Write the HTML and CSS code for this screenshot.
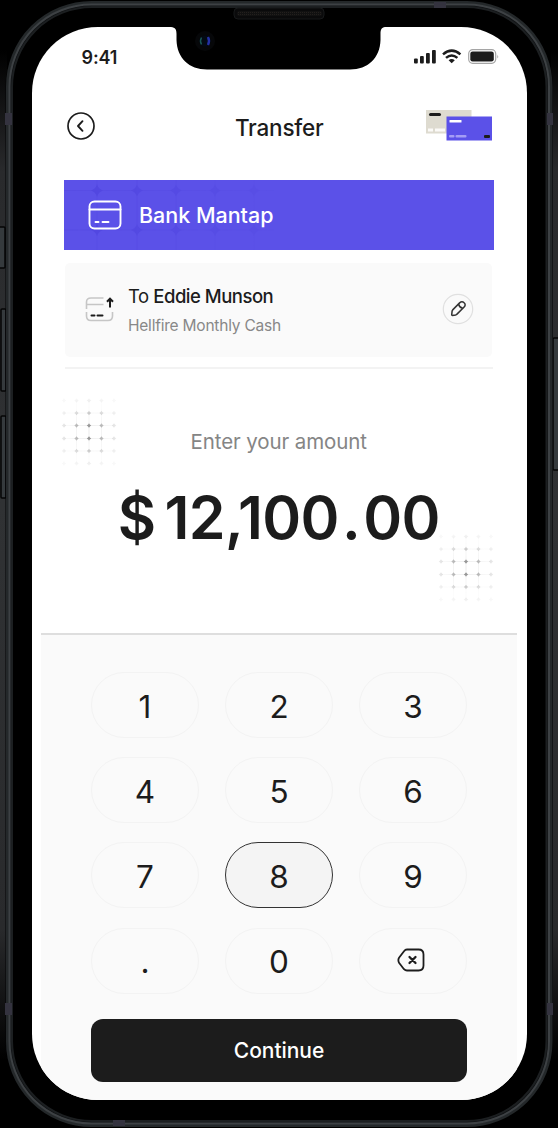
FILE: index.html
```html
<!DOCTYPE html>
<html lang="en">
<head>
<meta charset="utf-8">
<title>Transfer</title>
<link rel="stylesheet" href="styles.css">
</head>
<body>
<div class="stage">
  <svg class="device" width="558" height="1128" viewBox="0 0 558 1128" aria-hidden="true">
    <defs>
      <linearGradient id="side" x1="0" y1="0" x2="0" y2="1">
        <stop offset="0" stop-color="#000"/><stop offset=".12" stop-color="#292a2c"/><stop offset=".45" stop-color="#303234"/><stop offset=".87" stop-color="#292a2c"/><stop offset="1" stop-color="#000"/>
      </linearGradient>
      <pattern id="mesh" width="2" height="2" patternUnits="userSpaceOnUse"><rect width="2" height="2" fill="#111"/><rect width="1" height="1" fill="#231f1d"/></pattern>
    </defs>
    <rect width="558" height="1128" fill="#000"/>
    <rect y="50" width="7" height="1010" fill="url(#side)"/>
    <rect x="551" y="50" width="7" height="1010" fill="url(#side)"/>
    <g fill="#353a3d" stroke="#050505" stroke-width="1.5">
      <rect x="-2" y="227" width="7" height="41" rx="1"/>
      <rect x="1" y="309" width="5" height="82" rx="1"/>
      <rect x="1" y="416" width="5" height="82" rx="1"/>
      <rect x="553" y="338" width="6" height="132" rx="1"/>
    </g>
    <rect x="5.5" y="1" width="547.5" height="1126" rx="86" fill="#030304"/>
    <rect x="7.5" y="2.5" width="543.5" height="1123" rx="84" fill="#101214" stroke="#24282a" stroke-width="3"/>
    <rect x="9.5" y="4.5" width="539.5" height="1119" rx="82" fill="none" stroke="#3d4144" stroke-width="2"/>
    <rect x="12" y="7" width="534.5" height="1114" rx="80" fill="#000" stroke="#1c1f21" stroke-width="2"/>
    <g fill="#34333f">
      <rect x="5" y="113" width="7" height="12"/><rect x="547" y="113" width="6" height="12"/>
      <rect x="5" y="1003" width="7" height="12"/><rect x="547" y="1003" width="6" height="12"/>
      <rect x="434" y="2" width="12" height="6"/><rect x="113" y="1120" width="12" height="6"/>
    </g>
    <rect x="234" y="8" width="90" height="11" rx="4" fill="#0a0a0b" stroke="#17191a"/>
    <rect x="237" y="11" width="85" height="5" rx="2.5" fill="url(#mesh)"/>
  </svg>

  <main class="screen">
    <svg class="notch" width="214" height="43" viewBox="0 0 214 43" aria-hidden="true">
      <path d="M0 0H214C210.500 .5 209.500 2.500 209.500 7V13C209 31 197 42.500 179 42.500H36C18 42.500 6 31 5.500 13V7C5.500 2.500 4.500 .5 0 0Z" fill="#000"/>
      <circle cx="34" cy="14" r="10" fill="#060709"/><circle cx="34" cy="14" r="5.500" fill="#030a14"/>
      <path d="M30.500 10.500Q28.500 14 30.500 17.500" stroke="#195553" stroke-width="1.500" fill="none"/>
      <path d="M37 10Q39 14 37 18" stroke="#2430a3" stroke-width="2.400" fill="none"/>
    </svg>

    <div class="status">
      <span class="time">9:41</span>
      <svg width="86" height="18" viewBox="0 0 86 18">
        <g fill="#1c1c1c">
          <rect x="1" y="10.500" width="3.800" height="5" rx="1"/><rect x="7" y="8" width="3.800" height="7.500" rx="1"/><rect x="13" y="5" width="3.800" height="10.500" rx="1"/><rect x="19" y="2" width="3.800" height="13.500" rx="1"/>
          <path d="M38.700 15.200L35.600 12.200Q38.700 9.800 41.800 12.200Z"/>
        </g>
        <path d="M30 6.400Q38.700-1.200 47.400 6.400M33 9.900Q38.700 5 44.400 9.900" fill="none" stroke="#1c1c1c" stroke-width="2.500"/>
        <rect x="55.700" y="1.700" width="27" height="13.600" rx="4" fill="none" stroke="#a5a5a5" stroke-width="1.200"/>
        <rect x="57.300" y="3.400" width="23.500" height="10.200" rx="2.300" fill="#1c1c1c"/>
        <path d="M84.300 6.500Q86 8.500 84.300 10.500Z" fill="#a5a5a5"/>
      </svg>
    </div>

    <header class="header">
      <svg width="30" height="30" viewBox="0 0 30 30" fill="none" stroke="#1c1c1c">
        <circle cx="15" cy="15" r="13" stroke-width="1.700"/><path d="M16.500 10.200L12 15L16.500 19.800" stroke-width="1.900" stroke-linecap="round" stroke-linejoin="round"/>
      </svg>
      <h1 class="title">Transfer</h1>
      <svg width="66" height="32" viewBox="0 0 66 32">
        <rect x="0" y="0" width="45.500" height="23.500" fill="#dedbd0"/>
        <rect x="3" y="3" width="12" height="3" rx="1.500" fill="#1c1c1c"/>
        <path d="M2 18.500h5v3h-5zM9 18.500h10v3h-10z" fill="#fbfaf7"/>
        <rect x="20.500" y="6.500" width="45.500" height="24" fill="#5b51e8"/>
        <rect x="23.500" y="10" width="12" height="2.500" rx=".5" fill="#fff"/>
        <rect x="23" y="25" width="5.500" height="2.500" rx="1" fill="#a49df5"/><rect x="29.500" y="25" width="11" height="2.500" rx="1" fill="#a49df5"/>
        <rect x="58" y="25" width="6" height="3" rx="1" fill="#1c1c1c"/>
      </svg>
    </header>

    <section class="bank">
      <svg class="bank-pattern" width="430" height="70" viewBox="0 0 430 70" aria-hidden="true">
        <defs>
          <linearGradient id="fade"><stop offset="0" stop-color="#fff" stop-opacity=".6"/><stop offset=".3" stop-color="#fff" stop-opacity=".3"/><stop offset=".5" stop-color="#fff" stop-opacity=".1"/><stop offset="1" stop-color="#fff" stop-opacity="0"/></linearGradient>
          <mask id="m"><rect width="430" height="70" fill="url(#fade)"/></mask>
          <path id="star" d="M0-6Q1.500-1.500 6 0Q1.500 1.500 0 6Q-1.500 1.500-6 0Q-1.500-1.500 0-6Z"/>
        </defs>
        <g mask="url(#m)" fill="#4a3fdb">
          <path d="M0 10.500H210M0 50H210M33 0V70M73 0V70M112 0V70M151 0V70M190 0V70" stroke="#5246df" stroke-width=".7"/>
          <use href="#star" x="33" y="10.500"/><use href="#star" x="73" y="10.500"/><use href="#star" x="112" y="10.500"/><use href="#star" x="151" y="10.500"/><use href="#star" x="190" y="10.500"/>
          <use href="#star" x="33" y="50"/><use href="#star" x="73" y="50"/><use href="#star" x="112" y="50"/><use href="#star" x="151" y="50"/><use href="#star" x="190" y="50"/>
        </g>
      </svg>
      <svg class="bank-icon" width="34" height="30" viewBox="0 0 34 30" fill="none" stroke="#fff" stroke-width="1.900" stroke-linecap="round">
        <rect x="1.500" y="1.500" width="31" height="27" rx="5"/><path d="M1.500 9.500H32.500"/><path d="M7.500 22H10.500M14.500 22H20.500"/>
      </svg>
      <span class="bank-name">Bank Mantap</span>
    </section>

    <section class="recipient">
      <svg width="30" height="28" viewBox="0 0 30 28" fill="none" stroke="#c6c6c6" stroke-width="1.600">
        <path d="M18.500 2H6Q1.500 2 1.500 6V13M1.500 8.500H18.500M1.500 16V20Q1.500 24.500 6 24.500H23Q27.500 24.500 27.500 20V16"/>
        <path d="M6.500 19.500H9.500M12.500 19.500H17.500" stroke="#1c1c1c" stroke-width="2" stroke-linecap="round"/>
        <path d="M25 11.500V3M22 5.700L25 2.700L28 5.700" stroke="#1c1c1c" stroke-width="2"/>
      </svg>
      <div class="who">
        <div class="name">To <b>Eddie Munson</b></div>
        <div class="note">Hellfire Monthly Cash</div>
      </div>
      <svg class="edit" width="32" height="32" viewBox="0 0 32 32" fill="none">
        <circle cx="16" cy="16" r="14.700" stroke="#e0e0e0" stroke-width="1.200"/>
        <g stroke="#333" stroke-width="1.500" stroke-linejoin="round"><path d="M9.700 21.800L10.100 18.200Q10.200 17.500 10.700 16.900L17.600 9.900Q20 7.700 22.100 9.800Q24.300 11.900 21.900 14.300L15 21.100Q14.400 21.700 13.600 21.900L10.400 22.400Q9.700 22.400 9.700 21.800Z"/><path d="M16.500 11Q17.300 14.500 20.700 15.200"/></g>
      </svg>
    </section>

    <section class="amount">
      <svg class="sparkles sparkles-left" width="62" height="76" viewBox="0 0 62 76" aria-hidden="true">
        <defs>
          <radialGradient id="glow" gradientUnits="userSpaceOnUse" cx="31" cy="38" r="36"><stop offset="0" stop-color="#fff"/><stop offset=".3" stop-color="#fff" stop-opacity=".6"/><stop offset=".7" stop-color="#fff" stop-opacity=".2"/><stop offset="1" stop-color="#fff" stop-opacity=".05"/></radialGradient>
          <mask id="round"><rect width="62" height="76" fill="url(#glow)"/></mask>
          <path id="dot" d="M0-2.200Q.7-.7 2.200 0Q.7.7 0 2.200Q-.7.700-2.200 0Q-.7-.7 0-2.200Z"/>
          <g id="column"><use href="#dot" y="6.500"/><use href="#dot" y="19"/><use href="#dot" y="31.500"/><use href="#dot" y="44.500"/><use href="#dot" y="57"/><use href="#dot" y="69.500"/></g>
          <g id="grid" mask="url(#round)" fill="#777"><path d="M5 19H57M5 31.500H57M5 44.500H57M5 57H57M18.500 6V70M31 6V70M43.500 6V70" stroke="#e2e2e2" stroke-width=".7"/><use href="#column" x="6"/><use href="#column" x="18.500"/><use href="#column" x="31"/><use href="#column" x="43.500"/><use href="#column" x="56"/></g>
        </defs>
        <use href="#grid"/>
      </svg>
      <svg class="sparkles sparkles-right" width="62" height="76" viewBox="0 0 62 76" aria-hidden="true"><use href="#grid"/></svg>
      <div class="prompt">Enter your amount</div>
      <div class="value"><span class="currency">$</span><span class="whole">12,100</span><span class="point">.</span><span class="cents">00</span></div>
    </section>

    <section class="panel">
      <div class="keys">
        <button class="key">1</button><button class="key">2</button><button class="key">3</button>
        <button class="key">4</button><button class="key">5</button><button class="key">6</button>
        <button class="key">7</button><button class="key key-active">8</button><button class="key">9</button>
        <button class="key">.</button><button class="key">0</button>
        <button class="key key-delete" aria-label="Delete"><svg width="28" height="24" viewBox="0 0 28 24" fill="none" stroke="#1c1c1c" stroke-width="1.800" stroke-linejoin="round"><path d="M10 1.500H21.500Q26.500 1.500 26.500 6.500V17.500Q26.500 22.500 21.500 22.500H10Q8.300 22.500 7 21.200L2.200 15Q.5 12 2.200 9.500L7 3.200Q8.300 1.500 10 1.500Z"/><path d="M12.500 9L18.500 15M18.500 9L12.500 15" stroke-width="2.300" stroke-linecap="round"/></svg></button>
      </div>
      <button class="continue">Continue</button>
    </section>
  </main>
</div>
</body>
</html>
```
FILE: styles.css
```css
* { box-sizing: border-box; }
body { margin: 0; background: #000; font-family: Inter, "Liberation Sans", sans-serif; color: #1c1c1c; }
button { font: inherit; color: inherit; border: 0; padding: 0; }
svg { display: block; flex: none; }
.stage { position: relative; width: 558px; height: 1128px; padding: 27px 31px 28px 31.5px; overflow: hidden; }
.device { position: absolute; inset: 0; }
.screen { position: relative; height: 1073px; display: flex; flex-direction: column; overflow: hidden; border-radius: 66px; background: #fff; }
.notch { position: absolute; top: 0; left: 139.5px; }

.status { height: 61px; padding: 0 28.5px 0 50px; display: flex; align-items: center; justify-content: space-between; }
.status svg { margin-bottom: 2px; }
.time { font-size: 18px; font-weight: 600; letter-spacing: -.1px; }
.header { height: 76px; padding: 0 35px 0 34px; display: grid; grid-template-columns: 66px 1fr 66px; align-items: center; }
.title { margin: 0; padding: 2px 0 0 1px; text-align: center; font-size: 22.500px; font-weight: 500; letter-spacing: -.2px; }

.bank { position: relative; height: 70px; margin: 16px 33px 0 32.500px; padding-left: 24px; display: flex; align-items: center; gap: 17px; background: #5b51e8; color: #fff; }
.bank-pattern { position: absolute; inset: 0; }
.bank-icon { position: relative; }
.bank-name { position: relative; font-size: 21.500px; font-weight: 500; letter-spacing: -.02px; }

.recipient { height: 94px; margin: 13px 35px 0 33.500px; padding: 0 18px 0 20px; display: flex; align-items: center; gap: 13px; background: #fafafa; border-radius: 5px; }
.who { flex: 1; padding-top: 1px; }
.name { font-size: 18.500px; line-height: 30px; letter-spacing: -.5px; }
.name b { font-weight: 550; }
.note { font-size: 15.500px; line-height: 30px; letter-spacing: -.22px; color: #888; }
.edit { margin-bottom: 2px; }

.amount { position: relative; height: 266px; margin: 10px 34px 0 33px; padding-top: 58px; border-top: 2px solid #f3f3f3; text-align: center; }
.sparkles { position: absolute; }
.sparkles-left { left: -7px; top: 25px; }
.sparkles-right { right: -4px; top: 161px; }
.prompt { font-size: 20.500px; line-height: 30px; letter-spacing: -.1px; color: #858585; }
.value { display: flex; justify-content: center; margin-top: 25px; font-size: 59px; line-height: 72px; font-weight: 600; letter-spacing: -.6px; }
.currency { margin-right: 9px; }
.point { margin: 0 3px; }

.panel { flex: 1; margin: 0 10px 0 9.500px; padding: 37px 50px 0; background: #fafafa; border-top: 2px solid #dedede; }
.keys { display: grid; grid-template-columns: repeat(3, 108px); grid-auto-rows: 66px; justify-content: space-between; row-gap: 19.200px; }
.key { display: flex; align-items: center; justify-content: center; padding-top: 2px; border: 1px solid #f3f3f3; border-radius: 33px; background: #fafafa; font-size: 31.500px; }
.key-active { border: 1.500px solid #333; background: #f4f4f4; }
.key-delete { padding: 0 4px 2px 0; }
.continue { display: block; width: 100%; height: 63px; margin-top: 25.500px; border-radius: 12px; background: #1c1c1c; color: #fff; font-size: 21px; font-weight: 500; letter-spacing: -.05px; }
```
